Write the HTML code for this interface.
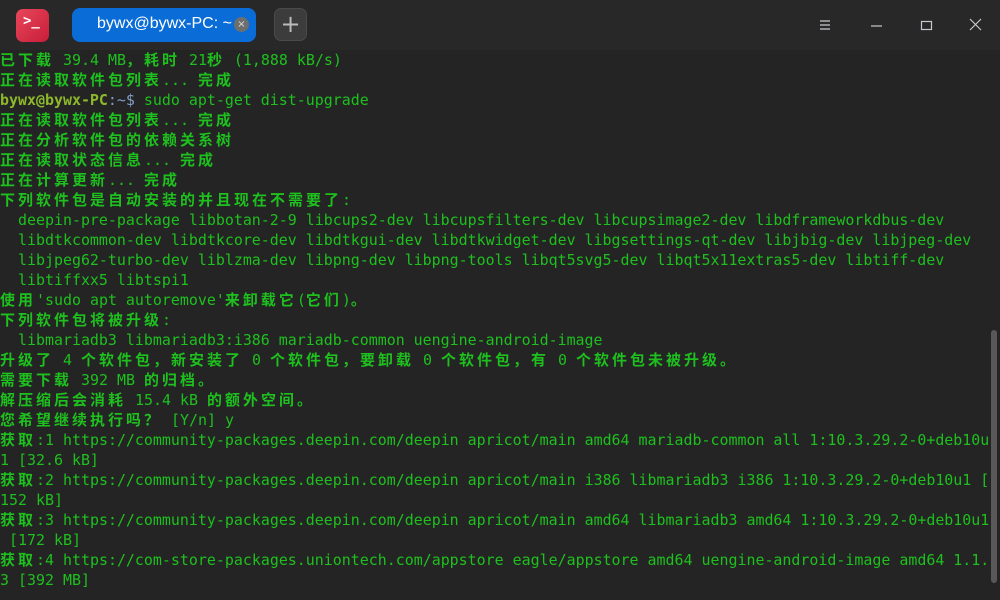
<!DOCTYPE html>
<html><head><meta charset="utf-8">
<style>
html,body{margin:0;padding:0;width:1000px;height:600px;overflow:hidden;background:#242424;}
#tb{position:absolute;left:0;top:0;width:1000px;height:50px;background:#282828;}
#logo{position:absolute;left:16px;top:9px;width:33px;height:33px;border-radius:7px;background:linear-gradient(135deg,#e8475a,#c81d3a);}
#logo span{position:absolute;left:7px;top:4px;color:#fff;font:bold 14px "DejaVu Sans Mono",monospace;}
#tab{position:absolute;left:72px;top:8px;width:184px;height:34px;border-radius:8px;background:#0a6cd6;}
#tab .t{position:absolute;left:25px;top:7px;color:#fff;font:16px "Liberation Sans",sans-serif;white-space:nowrap;}
#tab .x{position:absolute;left:162px;top:9px;width:15px;height:15px;border-radius:50%;background:#6e6e6e;color:#ddd;font:10px "DejaVu Sans",sans-serif;text-align:center;line-height:15px;}
#plus{position:absolute;left:274px;top:8px;width:33px;height:33px;border-radius:7px;background:#3c3c3c;border:1px solid #4a4a4a;box-sizing:border-box;color:#bbb;font:24px "DejaVu Sans",sans-serif;text-align:center;line-height:30px;}
#term{position:absolute;left:0;top:50px;font-family:"DejaVu Sans Mono","Noto Sans CJK SC",monospace;font-size:14.95px;color:#1ec01e;}
.l{height:20px;line-height:20px;white-space:pre;}
.c{display:inline-block;width:18px;text-align:left;font-family:"Noto Sans CJK SC",sans-serif;font-weight:bold;}
.p{color:#8cb82a;font-weight:bold}
.b{color:#7f9ec8}
#sb{position:absolute;left:991px;top:330px;width:6px;height:253px;border-radius:3px;background:#585858;}
</style></head><body>
<div id="tb">
<div id="logo"><span>&gt;_</span></div>
<div id="tab"><span class="t">bywx@bywx-PC: ~</span><span class="x">×</span></div>
<div id="plus">+</div>
<svg style="position:absolute;left:818px;top:18px" width="14" height="14"><path d="M2 3h10M2 7h10M2 11h10" stroke="#c8c8d0" stroke-width="1.2"/></svg>
<svg style="position:absolute;left:870px;top:18px" width="14" height="14"><path d="M1 8h11" stroke="#c8c8d0" stroke-width="1.2"/></svg>
<svg style="position:absolute;left:920px;top:18px" width="14" height="14"><rect x="1.5" y="3.5" width="10" height="8" fill="none" stroke="#c8c8d0" stroke-width="1.2"/></svg>
<svg style="position:absolute;left:969px;top:18px" width="14" height="14"><path d="M1 1l11 11M12 1L1 12" stroke="#c8c8d0" stroke-width="1.2"/></svg>
</div>
<div id="term">
<div class="l">已下载 39.4 MB，耗时 21秒 (1,888 kB/s)</div>
<div class="l">正在读取软件包列表... 完成</div>
<div class="l" data-raw="1"><span class="p">bywx@bywx-PC</span><span class="b">:~$</span> sudo apt-get dist-upgrade</div>
<div class="l">正在读取软件包列表... 完成</div>
<div class="l">正在分析软件包的依赖关系树</div>
<div class="l">正在读取状态信息... 完成</div>
<div class="l">正在计算更新... 完成</div>
<div class="l">下列软件包是自动安装的并且现在不需要了:</div>
<div class="l">  deepin-pre-package libbotan-2-9 libcups2-dev libcupsfilters-dev libcupsimage2-dev libdframeworkdbus-dev</div>
<div class="l">  libdtkcommon-dev libdtkcore-dev libdtkgui-dev libdtkwidget-dev libgsettings-qt-dev libjbig-dev libjpeg-dev</div>
<div class="l">  libjpeg62-turbo-dev liblzma-dev libpng-dev libpng-tools libqt5svg5-dev libqt5x11extras5-dev libtiff-dev</div>
<div class="l">  libtiffxx5 libtspi1</div>
<div class="l">使用'sudo apt autoremove'来卸载它(它们)。</div>
<div class="l">下列软件包将被升级:</div>
<div class="l">  libmariadb3 libmariadb3:i386 mariadb-common uengine-android-image</div>
<div class="l">升级了 4 个软件包，新安装了 0 个软件包，要卸载 0 个软件包，有 0 个软件包未被升级。</div>
<div class="l">需要下载 392 MB 的归档。</div>
<div class="l">解压缩后会消耗 15.4 kB 的额外空间。</div>
<div class="l">您希望继续执行吗？ [Y/n] y</div>
<div class="l">获取:1 https://community-packages.deepin.com/deepin apricot/main amd64 mariadb-common all 1:10.3.29.2-0+deb10u</div>
<div class="l">1 [32.6 kB]</div>
<div class="l">获取:2 https://community-packages.deepin.com/deepin apricot/main i386 libmariadb3 i386 1:10.3.29.2-0+deb10u1 [</div>
<div class="l">152 kB]</div>
<div class="l">获取:3 https://community-packages.deepin.com/deepin apricot/main amd64 libmariadb3 amd64 1:10.3.29.2-0+deb10u1</div>
<div class="l"> [172 kB]</div>
<div class="l">获取:4 https://com-store-packages.uniontech.com/appstore eagle/appstore amd64 uengine-android-image amd64 1.1.</div>
<div class="l">3 [392 MB]</div>
</div>
<div id="sb"></div>
<script>
document.querySelectorAll('#term .l').forEach(function(d){
 if(d.getAttribute('data-raw'))return;
 var t=d.textContent;
 d.innerHTML=t.replace(/&/g,'&amp;').replace(/</g,'&lt;').replace(/[\u3000-\u9fff\uff00-\uffef]/g,function(c){return '<span class="c">'+c+'</span>';});
});
</script>
</body></html>
